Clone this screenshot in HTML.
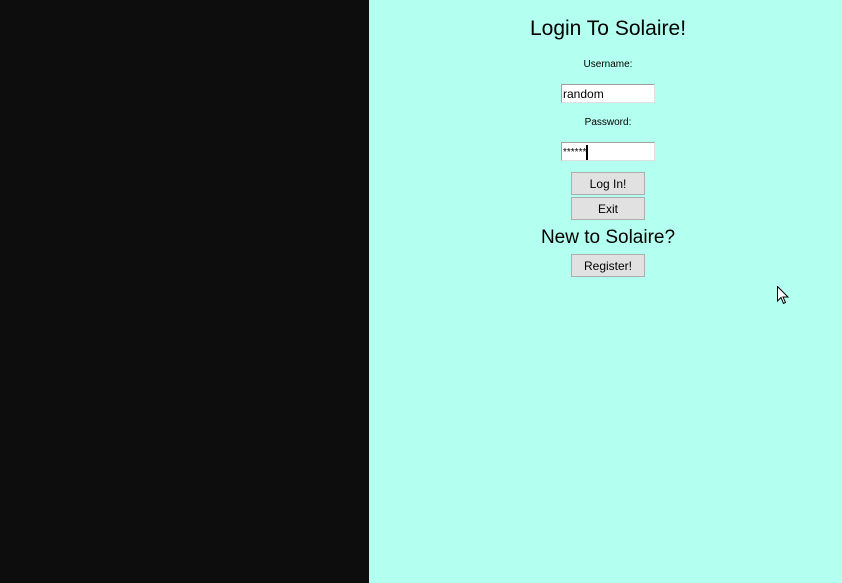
<!DOCTYPE html>
<html><head><style>
body{margin:0;width:842px;height:583px;overflow:hidden;background:#b3fff0;font-family:"Liberation Sans",sans-serif;position:relative}
.left{position:absolute;left:0;top:0;width:369px;height:583px;background:#0d0d0d}
.t{position:absolute;left:369px;width:478px;text-align:center;color:#000;white-space:nowrap}
.inp{position:absolute;left:561px;background:#fff;border:1px solid #a0a0a0;border-right-color:#e0e0e0;border-bottom-color:#e0e0e0;font-size:12px;line-height:17px;padding-left:1px;box-sizing:border-box;width:94px;height:19px}
.btn{position:absolute;left:571px;width:74px;height:23px;background:#e1e1e1;border:1px solid #adadad;box-sizing:border-box;font-size:12px;text-align:center;line-height:22px}
</style></head><body>
<div class="left"></div>
<div class="t" style="top:17px;font-size:21px">Login To Solaire!</div>
<div class="t" style="top:59px;font-size:10px">Username:</div>
<div class="inp" style="top:84px;line-height:19px">random</div>
<div class="t" style="top:117px;font-size:10px">Password:</div>
<div class="inp" style="top:142px;font-size:10px;line-height:19px">******<span style="display:inline-block;width:2px;height:15px;background:#000;vertical-align:middle"></span></div>
<div class="btn" style="top:172px">Log In!</div>
<div class="btn" style="top:197px">Exit</div>
<div class="t" style="top:227px;font-size:19px">New to Solaire?</div>
<div class="btn" style="top:254px">Register!</div>
<svg style="position:absolute;left:777px;top:286px" width="13" height="20" viewBox="0 0 13 20"><path d="M0.5 0.5 L0.5 15 L4 11.5 L6.5 17.5 L8.5 16.5 L6 11 L11 11 Z" fill="#fff" stroke="#000" stroke-width="1"/></svg>
</body></html>
